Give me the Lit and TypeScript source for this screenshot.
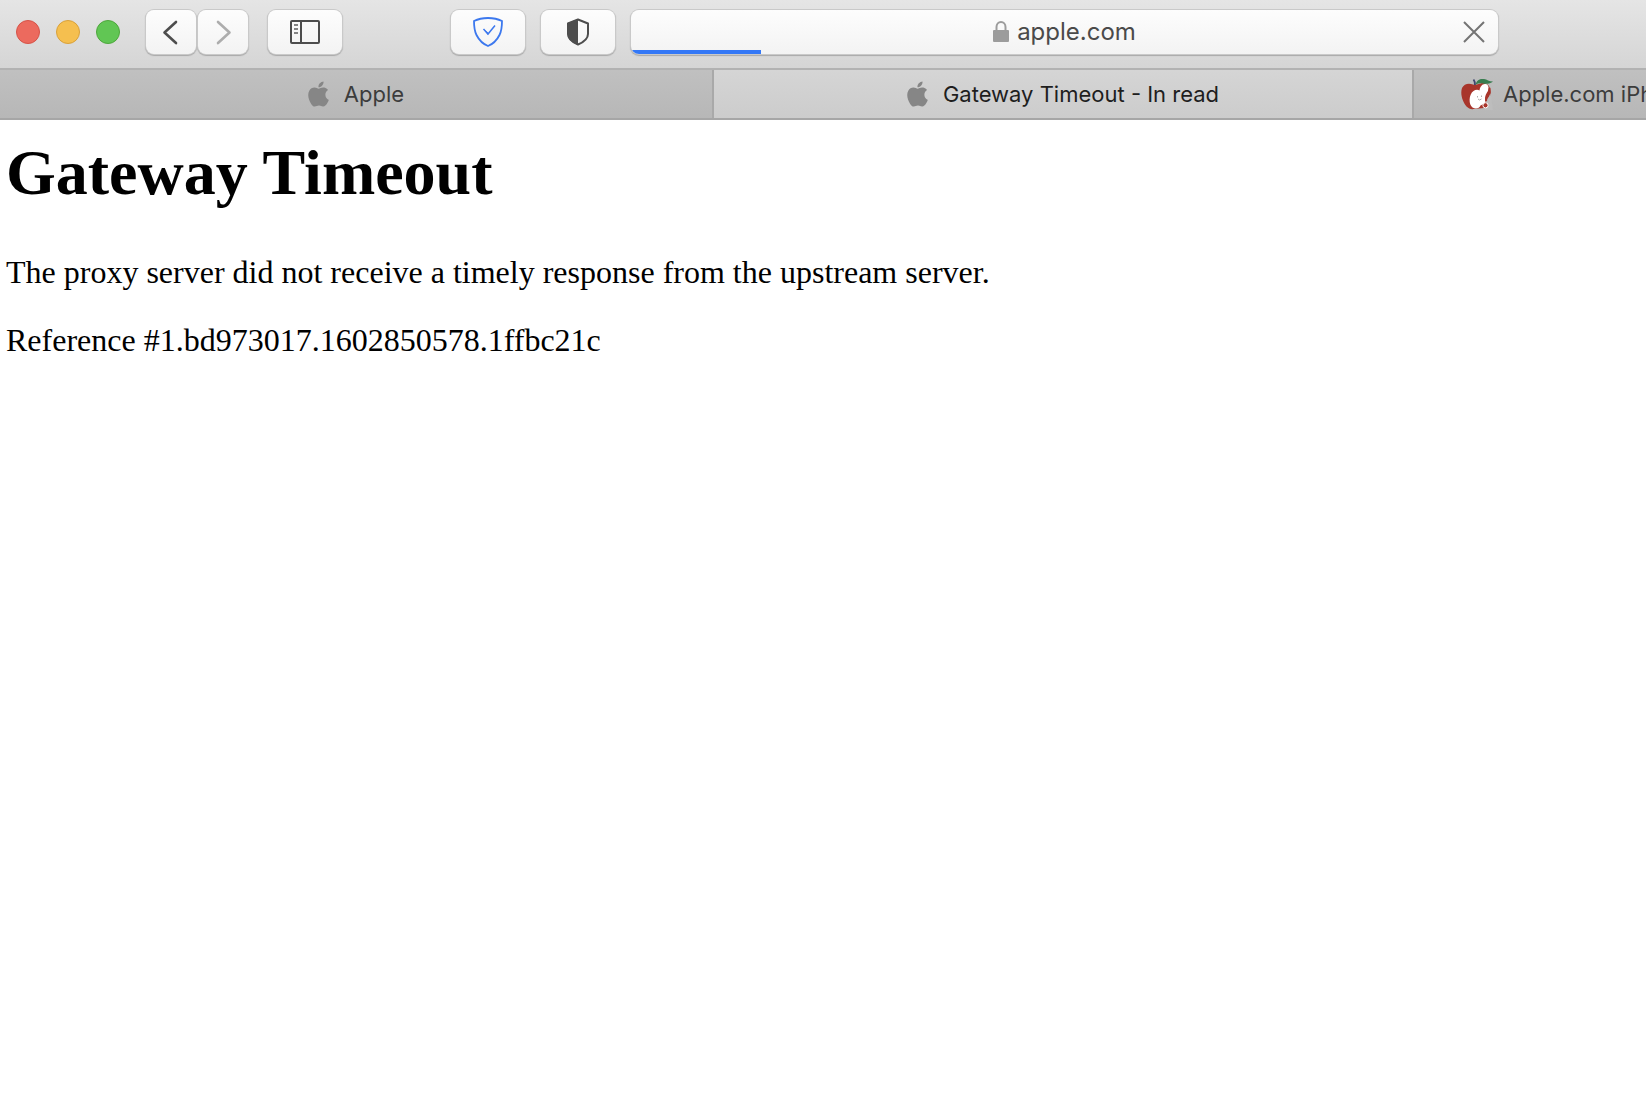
import { LitElement, html, svg, css } from "lit";
import { customElement, property } from "lit/decorators.js";
import { classMap } from "lit/directives/class-map.js";

const appleMark = html`<svg class="favicon" viewBox="2 0 20 24" aria-hidden="true">
  <path
    fill="#868686"
    d="M12.152 6.896c-.948 0-2.415-1.078-3.96-1.04-2.04.027-3.91 1.183-4.961 3.014-2.117 3.675-.546 9.103 1.519 12.09 1.013 1.454 2.208 3.09 3.792 3.039 1.52-.065 2.09-.987 3.935-.987 1.831 0 2.35.987 3.96.948 1.637-.026 2.676-1.48 3.676-2.948 1.156-1.688 1.636-3.325 1.662-3.415-.039-.013-3.182-1.221-3.22-4.857-.026-3.04 2.48-4.494 2.597-4.559-1.429-2.09-3.623-2.324-4.39-2.376-2-.156-3.675 1.09-4.61 1.09zM15.53 3.83c.843-1.012 1.4-2.427 1.245-3.83-1.207.052-2.662.805-3.532 1.818-.78.896-1.454 2.338-1.273 3.714 1.338.104 2.715-.688 3.559-1.701"
  />
</svg>`;

const bittenApple = html`<svg class="favicon wide" viewBox="0 0 32 32" aria-hidden="true">
  <path fill="#a8352b" d="M12 6.5C8 4.800 3 5.500 1 10c-2 6 .5 14 4.500 18.500C7.500 30.500 10 31.500 13 31l10-1c5-4 8-12 6.500-18C28.500 6 24 4 19.500 5.500 17 6.500 14.500 7 12 6.500z"/>
  <path fill="#fff" d="M12.500 13c2-1.500 4.500-1.500 6-.5.500-4 3-7 6-6.500 3.500.5 4 5 1.500 8.500-2 3-2.500 6-1.500 9l-1 2-4 2c-1 3-5 4-8 2-4-3-4-13 1-16.500z"/>
  <path fill="#bdbdbd" d="M25 22c2-2 3.500-4 4.500-7L32 32h-9l3-4z"/>
  <circle cx="24.500" cy="27.300" r="2.600" fill="#a8352b" stroke="#fff"/>
  <path fill="none" stroke="#a8352b" stroke-width="2" d="M28.500 10c1 5-3.500 8-3.500 13"/>
  <path fill="none" stroke="#41466f" stroke-width="1.800" d="M12.500 1.500c1.200 1.500 1.500 3.500 1.500 5.500"/>
  <path fill="#397d50" d="M14.500 6.500C16 1.500 19 .5 23 1c3 .5 5 2.500 9 2.500-2.500 2.500-7 2.500-10 2-3-.5-5 0-7.500 1z"/>
  <path fill="none" stroke="#999" stroke-width=".8" d="M16.500 18v1.500M20.500 17.500V19M17 21l1.500 1 2-1"/>
</svg>`;

const glyphs = {
  back: svg`<path d="M30 22 18.500 32.500 30 43" fill="none" stroke="#4d4d4d" stroke-width="2.600" stroke-linecap="round" stroke-linejoin="round"/>`,
  forward: svg`<path d="M20 22 31.500 32.500 20 43" fill="none" stroke="#adadad" stroke-width="2.600" stroke-linecap="round" stroke-linejoin="round"/>`,
};

@customElement("tool-button")
class ToolButton extends LitElement {
  @property() label = "";
  @property({ type: Boolean }) narrow = false;
  @property({ type: Boolean }) disabled = false;

  static styles = css`
    :host {
      display: block;
      flex: none;
    }
    .button {
      display: flex;
      align-items: center;
      justify-content: center;
      box-sizing: border-box;
      width: 74px;
      height: 44px;
      padding: 0;
      border: 0;
      border-radius: 8px;
      background: linear-gradient(#fdfdfd, #f3f3f3);
      box-shadow: 0 0 0 1px #c9c9c9, 0 1px 1px 1px #a9a9a9;
    }
    .narrow {
      width: 50px;
    }
  `;

  render() {
    return html`<button
      type="button"
      class=${classMap({ button: true, narrow: this.narrow })}
      aria-label=${this.label}
      ?disabled=${this.disabled}
    >
      <slot></slot>
    </button>`;
  }
}

@customElement("browser-toolbar")
class BrowserToolbar extends LitElement {
  @property({ type: Number }) progress = 15;

  static styles = css`
    :host {
      display: block;
    }
    .bar {
      display: flex;
      align-items: center;
      box-sizing: border-box;
      height: 70px;
      padding: 10px 148px 14px 16px;
      border-bottom: 2px solid #b2b2b2;
      background: linear-gradient(#e5e5e5, #d5d5d5);
    }
    .lights {
      display: flex;
      gap: 16px;
      margin-right: 26px;
    }
    .light {
      box-sizing: border-box;
      width: 24px;
      height: 24px;
      padding: 0;
      border: 1px solid;
      border-radius: 50%;
    }
    .close {
      background: #ec6a5e;
      border-color: #d65348;
    }
    .minimise {
      background: #f5bf4f;
      border-color: #d9a13a;
    }
    .zoom {
      background: #61c654;
      border-color: #4ea73c;
    }
    .history {
      display: flex;
      gap: 2px;
      margin-right: 20px;
    }
    .extensions {
      display: flex;
      gap: 16px;
      margin: 0 16px 0 109px;
    }
    .icon {
      display: block;
    }
    .address {
      display: flex;
      align-items: center;
      flex: 1;
      min-width: 0;
      height: 44px;
      position: relative;
      overflow: hidden;
      border-radius: 8px;
      background: linear-gradient(#fdfdfd, #f3f3f3);
    }
    .frame {
      display: flex;
      flex: 1;
      min-width: 0;
      border-radius: 8px;
      box-shadow: 0 0 0 1px #c9c9c9, 0 1px 1px 1px #a9a9a9;
    }
    .site {
      display: flex;
      align-items: center;
      justify-content: center;
      flex: 1;
      gap: 8px;
      padding-left: 48px;
    }
    .url {
      field-sizing: content;
      padding: 0;
      border: 0;
      outline: 0;
      background: none;
      color: #4a4a4a;
      font: 24px/28px Inter, sans-serif;
    }
    .stop {
      display: flex;
      width: 48px;
      height: 44px;
      padding: 0;
      border: 0;
      background: none;
      align-items: center;
      justify-content: center;
    }
    .progress {
      position: absolute;
      left: 0;
      bottom: 0;
      height: 4px;
      background: #3478f6;
    }
  `;

  render() {
    return html`<div class="bar">
      <div class="lights">
        <button type="button" class="light close" aria-label="Close"></button>
        <button type="button" class="light minimise" aria-label="Minimise"></button>
        <button type="button" class="light zoom" aria-label="Zoom"></button>
      </div>
      <div class="history">
        <tool-button narrow label="Back">
          <svg class="icon" width="50" height="44" viewBox="0 10 50 44">${glyphs.back}</svg>
        </tool-button>
        <tool-button narrow disabled label="Forward">
          <svg class="icon" width="50" height="44" viewBox="0 10 50 44">${glyphs.forward}</svg>
        </tool-button>
      </div>
      <tool-button label="Sidebar">
        <svg class="icon" width="30" height="24" viewBox="0 0 30 24" fill="none">
          <rect x="1" y="1" width="28" height="22" rx="1" stroke="#4d4d4d" stroke-width="2" />
          <path d="M11 1v22" stroke="#4d4d4d" stroke-width="2" />
          <path d="M4 5h4M4 9h4M4 13h4" stroke="#858585" stroke-width="2" />
        </svg>
      </tool-button>
      <div class="extensions">
        <tool-button label="Content blocker">
          <svg class="icon" width="30" height="30" viewBox="0 0 30 30" fill="none" stroke="#3c78ee">
            <path
              d="M15 1C10 1 5 2 1 4c0 4 0 9 2.500 14C6 23 10 27 15 29c5-2 9-6 11.500-11C29 13 29 8 29 4 25 2 20 1 15 1z"
              stroke-width="1.800"
            />
            <path d="m10.500 12 4.500 5L22 8.500" stroke-width="1.500" />
            <path d="m10.500 12 4.500 3.500V18z" fill="#3c78ee" stroke="none" />
          </svg>
        </tool-button>
        <tool-button label="Privacy report">
          <svg class="icon" width="24" height="28" viewBox="0 0 24 28">
            <path
              d="M12 1.500 22 5.500V16c0 5-4 8-10 10.500C6 24 2 21 2 16V5.500z"
              fill="none"
              stroke="#4d4d4d"
              stroke-width="2"
              stroke-linejoin="round"
            />
            <path d="M12 1 1.500 5v11.500C2 22 7 25 12 27z" fill="#4d4d4d" />
          </svg>
        </tool-button>
      </div>
      <div class="frame">
        <div class="address">
          <div class="site">
            <svg class="icon" width="16" height="22" viewBox="0 0 16 22">
              <path d="M3.500 10V6a4.500 5 0 0 1 9 0v4" fill="none" stroke="#9c9c9c" stroke-width="2" />
              <rect y="9" width="16" height="12" rx="1" fill="#9c9c9c" />
            </svg>
            <input class="url" aria-label="Address" size="9" .value=${"apple.com"} />
          </div>
          <button type="button" class="stop" aria-label="Stop loading">
            <svg class="icon" width="22" height="22" viewBox="0 0 22 22">
              <path d="m1 1 20 20M21 1 1 21" stroke="#747474" stroke-width="2" />
            </svg>
          </button>
          <div class="progress" style="width:${this.progress}%"></div>
        </div>
      </div>
    </div>`;
  }
}

@customElement("tab-strip")
class TabStrip extends LitElement {
  static styles = css`
    :host {
      display: block;
    }
    .tabs {
      display: grid;
      grid-template-columns: minmax(0, 714fr) minmax(0, 700fr) minmax(0, 232fr);
      box-sizing: border-box;
      height: 50px;
      border-bottom: 2px solid #a6a6a6;
    }
    .tab {
      display: flex;
      align-items: center;
      justify-content: center;
      gap: 15px;
      overflow: hidden;
      padding: 0;
      border: 0;
      border-right: 2px solid #a9a9a9;
      background: linear-gradient(#c0c0c0, #b7b7b7);
      color: #3c3c3c;
      font: 22px/28px Inter, sans-serif;
      white-space: nowrap;
    }
    .active {
      background: linear-gradient(#d5d5d5, #cccccc);
      color: #1e1e1e;
    }
    .cut {
      justify-content: flex-start;
      gap: 10px;
      padding-left: 47px;
      border-right: 0;
    }
    .favicon {
      flex: none;
      width: 21px;
      height: 26px;
    }
    .wide {
      width: 32px;
      height: 32px;
    }
  `;

  render() {
    return html`<div class="tabs" role="tablist">
      <button type="button" role="tab" class="tab" aria-selected="false">${appleMark}<span>Apple</span></button>
      <button type="button" role="tab" class="tab active" aria-selected="true">
        ${appleMark}<span>Gateway Timeout - In read</span>
      </button>
      <button type="button" role="tab" class="tab cut" aria-selected="false">
        ${bittenApple}<span>Apple.com iPh</span>
      </button>
    </div>`;
  }
}

@customElement("app-root")
class AppRoot extends LitElement {
  static styles = css`
    :host {
      display: block;
      min-height: 100vh;
      background: #fff;
    }
    .page {
      padding: 16px 6px;
      color: #000;
      font: 32px/36px "Liberation Serif", serif;
    }
    .title {
      margin: 0 0 44px;
      font-size: 64px;
      line-height: 74px;
      font-weight: 700;
    }
    .text {
      margin: 0 0 32px;
    }
  `;

  render() {
    return html`<browser-toolbar></browser-toolbar>
      <tab-strip></tab-strip>
      <main class="page">
        <h1 class="title">Gateway Timeout</h1>
        <p class="text">The proxy server did not receive a timely response from the upstream server.</p>
        <p class="text">Reference #1.bd973017.1602850578.1ffbc21c</p>
      </main>`;
  }
}
